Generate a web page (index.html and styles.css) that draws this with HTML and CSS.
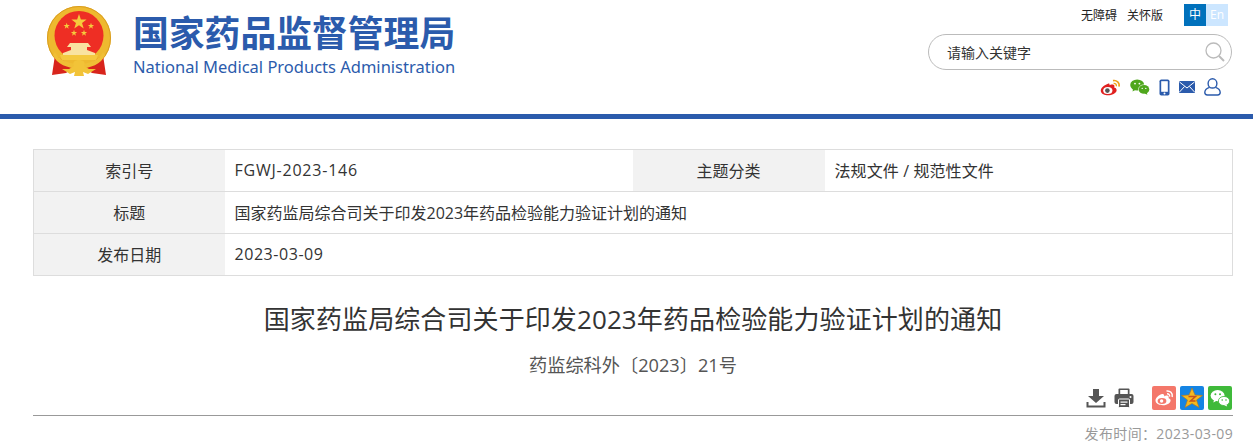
FILE: index.html
```html
<!DOCTYPE html>
<html lang="zh-CN">
<head>
    <meta charset="UTF-8">
    <meta name="viewport" content="width=device-width, initial-scale=1.0">
    <title>国家药监局综合司关于印发2023年药品检验能力验证计划的通知</title>
    <link rel="stylesheet" href="styles.css">
</head>
<body>
    <header class="site-header">
        <div class="brand">
            <svg class="emblem" width="68" height="72" viewBox="0 0 68 72">
                <defs>
                    <polygon id="star" points="0,-10 2.35,-3.1 9.5,-3.1 3.8,1.2 5.9,8.1 0,4 -5.9,8.1 -3.8,1.2 -9.5,-3.1 -2.35,-3.1"/>
                </defs>
                <circle cx="33" cy="32" r="32" fill="#eeb92f"/>
                <circle cx="33" cy="32" r="31.5" fill="none" stroke="#d99d20" stroke-width="1"/>
                <circle cx="33" cy="29.5" r="24.5" fill="#ee2e24"/>
                <path d="M9 49 L6 69 L20 67 L27 62 L22 58 Z M57 49 L60 69 L46 67 L39 62 L44 58 Z" fill="#d8241c"/>
                <g fill="#f5cb3c">
                    <use href="#star" transform="translate(33 16) scale(.8)"/>
                    <use href="#star" transform="translate(20.7 20) scale(.33)"/>
                    <use href="#star" transform="translate(45 20) scale(.33)"/>
                    <use href="#star" transform="translate(28 27) scale(.33)"/>
                    <use href="#star" transform="translate(38 27) scale(.33)"/>
                </g>
                <path d="M24 37 H42 L45 41 H41 V44 L49 47 V50 H17 V47 L25 44 V41 H21 Z" fill="#f9e3a0"/>
                <path d="M14 49 H52 L50 54 H16 Z" fill="#f4c93f"/>
                <path d="M9 46 C16 62 50 62 57 46 L59 49 C52 67 14 67 7 49 Z" fill="#f0bf35"/>
                <path d="M16 63 H23 L28 60 C26 56 29 54 33 54 C37 54 40 56 38 60 L43 63 H50 L42 68 L37 66 L38 70 H28 L29 66 L24 68 Z" fill="#f2c338"/>
            </svg>
            <div class="brand-text">
                <div class="brand-cn">国家药品监督管理局</div>
                <div class="brand-en">National Medical Products Administration</div>
            </div>
        </div>
        <div class="header-right">
            <div class="top-links">
                <a>无障碍</a>
                <a>关怀版</a>
                <div class="lang">
                    <span class="lang-cn">中</span><span class="lang-en">En</span>
                </div>
            </div>
            <div class="search">
                <span class="search-text">请输入关键字</span>
                <svg width="20" height="20" viewBox="0 0 20 20" fill="none" stroke="#bbb">
                    <circle cx="8.5" cy="8.5" r="7.5" stroke-width="1.3"/>
                    <path d="M14 14 L19 19" stroke-width="2"/>
                </svg>
            </div>
            <div class="header-icons">
                <!-- weibo -->
                <svg width="21" height="17" viewBox="0 0 21 17">
                    <path d="M8.5 4.5 C4 6 0.5 9 0.8 12 C1.2 15.5 6 16.6 9.5 16.2 C13.5 15.8 17 13.5 16.6 10.8 C16.3 9.2 15 8.8 14.2 8.6 C14.8 7 14.5 5.8 13 5.5 C11.6 5.2 10 6 9.4 6.2 C9.8 5 9.6 4.2 8.5 4.5 Z" fill="#e0201f"/>
                    <ellipse cx="7.8" cy="11.4" rx="4.6" ry="3.5" fill="#fff"/>
                    <circle cx="7.4" cy="11.6" r="2.3" fill="#555"/>
                    <path d="M13 1.6 C16.5 0.8 20 3.6 19 7.6" fill="none" stroke="#efa21b" stroke-width="1.6"/>
                    <path d="M13.6 4.4 C15.3 4.2 16.8 5.4 16.3 7.2" fill="none" stroke="#efa21b" stroke-width="1.4"/>
                </svg>
                <!-- wechat -->
                <svg width="20" height="16" viewBox="0 0 20 16">
                    <ellipse cx="7.2" cy="6" rx="7" ry="5.6" fill="#4fa71d"/>
                    <path d="M3 9.5 L2.6 12.6 L6 10.6 Z" fill="#4fa71d"/>
                    <ellipse cx="14" cy="10.4" rx="5.8" ry="4.8" fill="#fff"/>
                    <ellipse cx="14" cy="10.4" rx="5.3" ry="4.4" fill="#4fa71d"/>
                    <path d="M16.8 13.6 L17.4 15.8 L14.6 14.6 Z" fill="#4fa71d"/>
                    <circle cx="5" cy="4.6" r="0.9" fill="#fff"/>
                    <circle cx="9.4" cy="4.6" r="0.9" fill="#fff"/>
                    <circle cx="12.2" cy="9.4" r="0.7" fill="#fff"/>
                    <circle cx="15.8" cy="9.4" r="0.7" fill="#fff"/>
                </svg>
                <!-- phone -->
                <svg width="11" height="17" viewBox="0 0 11 17">
                    <rect x="0.5" y="0.5" width="10" height="16" rx="1.8" fill="#2b5bac"/>
                    <rect x="2.2" y="2.2" width="6.6" height="10.6" fill="#fff"/>
                    <circle cx="5.5" cy="14.6" r="1" fill="#fff"/>
                </svg>
                <!-- mail -->
                <svg width="16" height="12" viewBox="0 0 16 12">
                    <rect width="16" height="12" rx="1" fill="#2b5bac"/>
                    <path d="M0.5 1 L8 7 L15.5 1 M0.5 11 L5.5 5.5 M15.5 11 L10.5 5.5" fill="none" stroke="#fff" stroke-width="1"/>
                </svg>
                <!-- user -->
                <svg width="17" height="18" viewBox="0 0 17 18" fill="none" stroke="#2b5bac" stroke-width="1.4">
                    <ellipse cx="8.5" cy="5.4" rx="4.4" ry="4.6"/>
                    <path d="M5.6 9.4 C2.6 10.4 0.8 12.4 0.8 14.6 C0.8 16.2 2 17 3.4 17 L13.6 17 C15 17 16.2 16.2 16.2 14.6 C16.2 12.4 14.4 10.4 11.4 9.4"/>
                </svg>
            </div>
        </div>
    </header>

    <main class="container">
        <table class="info-table">
            <colgroup>
                <col class="col-first"><col><col class="col-label"><col>
            </colgroup>
            <tr>
                <th>索引号</th>
                <td class="code">FGWJ-2023-146</td>
                <th>主题分类</th>
                <td class="topic">法规文件 / 规范性文件</td>
            </tr>
            <tr>
                <th>标题</th>
                <td colspan="3">国家药监局综合司关于印发2023年药品检验能力验证计划的通知</td>
            </tr>
            <tr>
                <th>发布日期</th>
                <td colspan="3" class="date">2023-03-09</td>
            </tr>
        </table>

        <h1 class="article-title">国家药监局综合司关于印发2023年药品检验能力验证计划的通知</h1>
        <p class="article-no">药监综科外〔2023〕21号</p>

        <div class="tools">
            <svg width="20" height="20" viewBox="0 0 20 20">
                <path d="M7 1 H13 V8 H18 L10 15 L2 8 H7 Z" fill="#555"/>
                <path d="M1.5 14 V18.5 H18.5 V14" fill="none" stroke="#555" stroke-width="2"/>
            </svg>
            <svg class="print" width="20" height="20" viewBox="0 0 20 20">
                <path d="M4.5 6 V1.5 Q4.5 0.5 5.5 0.5 H14.5 Q15.5 0.5 15.5 1.5 V6 Z" fill="#555"/>
                <rect x="6.2" y="2" width="7.6" height="4" fill="#fff"/>
                <rect x="0.5" y="6" width="19" height="10" rx="2" fill="#555"/>
                <rect x="4.5" y="11" width="11" height="8.5" rx="1" fill="#555" stroke="#fff" stroke-width="1"/>
                <rect x="6.5" y="13.5" width="7" height="1.2" fill="#fff"/>
                <rect x="6.5" y="16" width="5" height="1.2" fill="#fff"/>
                <circle cx="16.5" cy="9" r="1" fill="#fff"/>
            </svg>
            <svg class="share" width="24" height="24" viewBox="0 0 24 24">
                <rect width="24" height="24" rx="2" fill="#f4776a"/>
                <path d="M10 8 C6 9.5 3.5 12 3.5 14.5 C3.5 17.5 7 19.2 11 19.2 C15.5 19.2 18.6 16.6 18.6 14.4 C18.6 13 17.4 12.4 16.6 12.2 C17 10.6 16.4 9.6 15 9.6 C13.8 9.6 12.8 10.2 12.2 10.4 C12.6 8.6 11.6 7.6 10 8 Z" fill="#fff"/>
                <ellipse cx="10" cy="15" rx="4.4" ry="3" fill="#f4776a"/>
                <circle cx="9.6" cy="15" r="1.7" fill="#fff"/>
                <path d="M14.5 5 C18 4.5 21 7 20.2 11" fill="none" stroke="#fff" stroke-width="1.5"/>
                <path d="M15 7.8 C16.6 7.6 18 8.8 17.6 10.6" fill="none" stroke="#fff" stroke-width="1.3"/>
            </svg>
            <svg class="share" width="24" height="24" viewBox="0 0 24 24">
                <rect width="24" height="24" rx="2" fill="#1584e3"/>
                <polygon points="12,2 15,9 22.5,9.5 16.5,14 19,21.5 12,17.5 5,21.5 7.5,14 1.5,9.5 9,9" fill="#f6b91e" stroke="#b5761a" stroke-width="0.6"/>
                <path d="M8.5 10.5 H15.5 L10.5 15 H15.5" fill="none" stroke="#c8511b" stroke-width="1.5"/>
            </svg>
            <svg class="share" width="24" height="24" viewBox="0 0 24 24">
                <rect width="24" height="24" rx="2" fill="#3fba3a"/>
                <ellipse cx="9.6" cy="9.6" rx="7" ry="5.6" fill="#fff"/>
                <path d="M6 13.5 L5.4 16.6 L9 14.6 Z" fill="#fff"/>
                <ellipse cx="16" cy="15" rx="5.6" ry="4.6" fill="#fff" stroke="#3fba3a" stroke-width="0.8"/>
                <path d="M18.4 18.4 L19.2 20.6 L16.2 19.2 Z" fill="#fff"/>
                <circle cx="7.4" cy="8.2" r="1" fill="#3fba3a"/>
                <circle cx="12" cy="8.2" r="1" fill="#3fba3a"/>
                <circle cx="14.2" cy="14" r="0.8" fill="#3fba3a"/>
                <circle cx="18" cy="14" r="0.8" fill="#3fba3a"/>
            </svg>
        </div>
        <div class="pub-date">发布时间：2023-03-09</div>
    </main>
</body>
</html>
```
FILE: styles.css
```css
:root {
    --brand-blue: #2b5bac;
    --border-color: #ddd;
    --label-background: #f2f2f2;
    --text-color: #333;
}

* {
    box-sizing: border-box;
    margin: 0;
    padding: 0;
}

html, body {
    height: 443px;
    overflow: hidden;
}

body {
    font-family: "Open Sans", "Noto Sans CJK SC", sans-serif;
    background-color: #fff;
    color: var(--text-color);
}

/* Header */
.site-header {
    display: flex;
    justify-content: space-between;
    height: 119px;
    padding: 4px 21px 0 46px;
    border-bottom: 5px solid var(--brand-blue);
}

.brand {
    display: flex;
    align-items: flex-start;
    gap: 20px;
    padding-top: 2px;
}

.brand-text {
    display: flex;
    flex-direction: column;
    color: var(--brand-blue);
    padding-top: 5px;
    margin-left: -1px;
}

.brand-cn {
    font-family: "Noto Sans CJK SC", sans-serif;
    font-size: 35.8px;
    font-weight: 700;
    line-height: 40px;
    white-space: nowrap;
}

.brand-en {
    font-family: "Noto Sans", sans-serif;
    font-size: 16.5px;
    line-height: 20px;
    margin-top: 6px;
    white-space: nowrap;
}

.header-right {
    display: flex;
    flex-direction: column;
    align-items: flex-end;
    width: 304px;
}

.top-links {
    display: flex;
    align-items: center;
    height: 22px;
    padding-right: 4px;
    font-size: 12px;
    color: #222;
}

.top-links a {
    margin-right: 10px;
}

.lang {
    display: flex;
    margin-left: 11px;
    margin-right: 0;
}

.lang span {
    width: 22px;
    height: 22px;
    line-height: 22px;
    text-align: center;
}

.lang-cn {
    background-color: #0071bc;
    color: #fff;
}

.lang-en {
    background-color: #cce6ff;
    color: #fff;
}

.search {
    display: flex;
    align-items: center;
    justify-content: space-between;
    width: 100%;
    height: 36px;
    margin-top: 8px;
    padding: 0 6px 1px 18px;
    border: 1px solid #bbb;
    border-radius: 18px;
    font-size: 14px;
}

.header-icons {
    display: flex;
    align-items: center;
    gap: 9px;
    margin-top: 8px;
    padding-right: 11px;
}

/* Content */
.container {
    width: 1200px;
    margin: 30px 0 0 33px;
}

.info-table {
    width: 100%;
    table-layout: fixed;
    border-collapse: collapse;
    border: 1px solid var(--border-color);
    font-size: 16px;
}

.col-first {
    width: 191px;
}

.col-label {
    width: 192px;
}

.info-table th,
.info-table td {
    height: 42px;
    padding-bottom: 1px;
    border-top: 1px solid var(--border-color);
    border-bottom: 1px solid var(--border-color);
    font-weight: 400;
}

.info-table th {
    background-color: var(--label-background);
    text-align: center;
}

.info-table td {
    padding-left: 10px;
}

.info-table .code {
    letter-spacing: 0.78px;
}

.info-table .date {
    letter-spacing: 0.55px;
}

.info-table .topic {
    letter-spacing: 0.1px;
}

.article-title {
    margin-top: 23px;
    font-size: 26px;
    font-weight: 400;
    line-height: 40px;
    letter-spacing: 0.1px;
    text-align: center;
}

.article-no {
    margin-top: 13px;
    font-size: 18.2px;
    line-height: 26px;
    text-align: center;
    color: #555;
}

.tools {
    display: flex;
    justify-content: flex-end;
    align-items: center;
    height: 31px;
    margin-top: 7px;
    padding: 0 1px 4px 0;
    border-bottom: 1px solid #999;
}

.tools svg {
    margin-left: 4px;
}

.tools .print {
    margin-left: 8px;
    margin-right: 14px;
}

.pub-date {
    margin-top: 8px;
    font-size: 14px;
    line-height: 20px;
    letter-spacing: 0.36px;
    text-align: right;
    color: #999;
}
```
